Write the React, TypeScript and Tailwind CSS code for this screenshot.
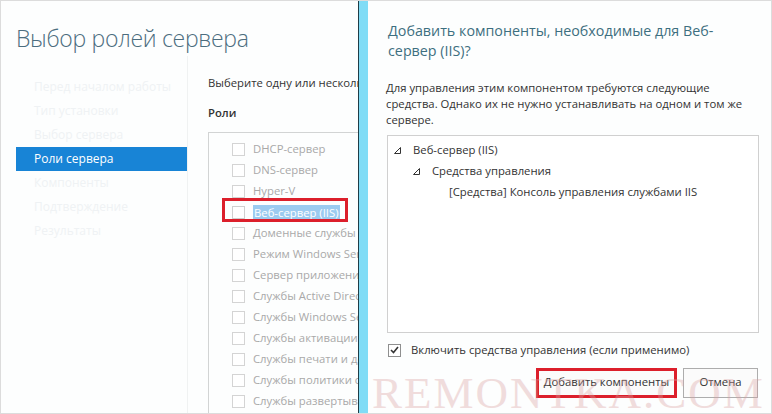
import React from "react"

const navItems = [
    "Перед началом работы",
    "Тип установки",
    "Выбор сервера",
    "Роли сервера",
    "Компоненты",
    "Подтверждение",
    "Результаты",
]

const roles = [
    "DHCP-сервер",
    "DNS-сервер",
    "Hyper-V",
    "Веб-сервер (IIS)",
    "Доменные службы Active Directory",
    "Режим Windows Server Essentials",
    "Сервер приложений",
    "Службы Active Directory облегченного доступа",
    "Службы Windows Server Update Services",
    "Службы активации корпоративных лицензий",
    "Службы печати и документов",
    "Службы политики сети и доступа",
    "Службы развертывания Windows",
]

function Expander() {
    return (
        <svg width="7" height="7" viewBox="0 0 7 7" className="shrink-0">
            <path d="M6.5 0.5 L6.5 6.5 L0.5 6.5 Z" fill="none" stroke="#333" strokeWidth="1" />
        </svg>
    )
}

export default function App() {
    return (
        <div
            className="relative flex w-[772px] h-[414px] overflow-hidden bg-white border border-[#dcdcdc] text-[#333]"
            style={{ fontFamily: '"Open Sans", "Noto Sans", sans-serif' }}
        >
            {/* Server manager wizard (behind) */}
            <div className="w-[357px] shrink-0 flex flex-col overflow-hidden bg-[#fdfefe]">
                <h1 className="pl-[15px] pt-[20px] h-[64px] text-[23px] font-light text-[#4c6d7e] tracking-[-0.3px] whitespace-nowrap">
                    Выбор ролей сервера
                </h1>
                <div className="ml-[15px] h-[3px] bg-[#eef0f0]" />

                <div className="flex flex-1">
                    {/* Steps */}
                    <div className="w-[172px] shrink-0 ml-[15px] pt-[19px] border-r border-[#f0f2f2]">
                        {navItems.map((item) =>
                            item === "Роли сервера" ? (
                                <div key={item} className="h-6 leading-6 pl-[18px] text-[12px] bg-[#1884d6] text-white">
                                    {item}
                                </div>
                            ) : (
                                <div key={item} className="h-6 leading-6 pl-[18px] text-[12px] text-[#eff2f4] whitespace-nowrap">
                                    {item}
                                </div>
                            )
                        )}
                    </div>

                    {/* Roles */}
                    <div className="flex-1 pl-5 pt-[19px] whitespace-nowrap">
                        <p className="text-[11.3px] leading-4">
                            Выберите одну или несколько ролей для установки на выбранном сервере.
                        </p>
                        <p className="mt-[14px] text-[11.3px] leading-4 font-semibold">Роли</p>
                        <div className="mt-[11px] w-[300px] h-[300px] border-l border-t border-[#d2d4d4] pt-[6px] pl-[23px]">
                            {roles.map((role) =>
                                role === "Веб-сервер (IIS)" ? (
                                    <div key={role} className="relative h-[21px] flex items-center gap-2">
                                        <span className="w-[13px] h-[13px] border border-[#cfcfcf] bg-white shrink-0" />
                                        <span className="bg-[#9ccbf0] text-white text-[11.3px] leading-[15px] px-[1px]">{role}</span>
                                        <span className="absolute left-[-10px] top-[-4px] w-[126px] h-[24px] border-[3px] border-[#dc1f2b]" />
                                    </div>
                                ) : (
                                    <div key={role} className="h-[21px] flex items-center gap-2">
                                        <span className="w-[13px] h-[13px] border border-[#d4d4d4] bg-white shrink-0" />
                                        <span className="text-[11.3px] text-[#a9a9a9]">{role}</span>
                                    </div>
                                )
                            )}
                        </div>
                    </div>
                </div>
            </div>

            {/* Dialog edge */}
            <div className="w-px shrink-0 bg-[#1f3d47]" />
            <div className="w-[9px] shrink-0 bg-[#80dcf6]" />

            {/* Dialog */}
            <div className="flex-1 flex flex-col bg-[#fdfefe] pl-[18px] pr-[12px]">
                <h2 className="pt-[20px] pl-[2px] text-[14.3px] leading-[20px] text-[#3d6f80] pr-[40px]">
                    Добавить компоненты, необходимые для Веб-сервер (IIS)?
                </h2>
                <p className="mt-[19px] text-[11.3px] leading-4 pr-[14px]">
                    Для управления этим компонентом требуются следующие средства. Однако их не нужно устанавливать на одном и том же сервере.
                </p>
                <div className="mt-[7px] ml-[1px] w-[372px] h-[198px] border border-[#d0d0d0] bg-white pt-[4px] text-[11.3px]">
                    <div className="h-[21px] flex items-center pl-[6px] gap-[12px]">
                        <Expander />
                        <span>Веб-сервер (IIS)</span>
                    </div>
                    <div className="h-[21px] flex items-center pl-[25px] gap-[12px]">
                        <Expander />
                        <span>Средства управления</span>
                    </div>
                    <div className="h-[21px] flex items-center pl-[61px]">
                        <span>[Средства] Консоль управления службами IIS</span>
                    </div>
                </div>
                <label className="mt-[9px] ml-[2px] flex items-center gap-[10px] text-[11.3px]">
                    <span className="w-[13px] h-[13px] border border-[#8f8f8f] bg-white flex items-center justify-center shrink-0">
                        <svg width="9" height="8" viewBox="0 0 9 8">
                            <path d="M1 4 L3.5 6.5 L8 1" fill="none" stroke="#333" strokeWidth="1.6" />
                        </svg>
                    </span>
                    Включить средства управления (если применимо)
                </label>
                <div className="mt-[9px] flex justify-end gap-[6px] pr-[1px]">
                    <button className="w-[141px] h-[30px] border-[3px] border-[#dc1f2b] bg-[#fbfbfb] text-[11.3px]">
                        Добавить компоненты
                    </button>
                    <button className="w-[75px] h-[30px] border border-[#adadad] bg-[#fbfbfb] text-[11.3px]">
                        Отмена
                    </button>
                </div>
            </div>

            {/* Watermark */}
            <div
                className="pointer-events-none absolute left-[371px] top-[370px] text-[45px] leading-[45px] tracking-[2px] text-[#d9a0a0] opacity-35 whitespace-nowrap"
                style={{ fontFamily: '"Liberation Serif", serif' }}
            >
                REMONTKA.COM
            </div>
        </div>
    )
}
